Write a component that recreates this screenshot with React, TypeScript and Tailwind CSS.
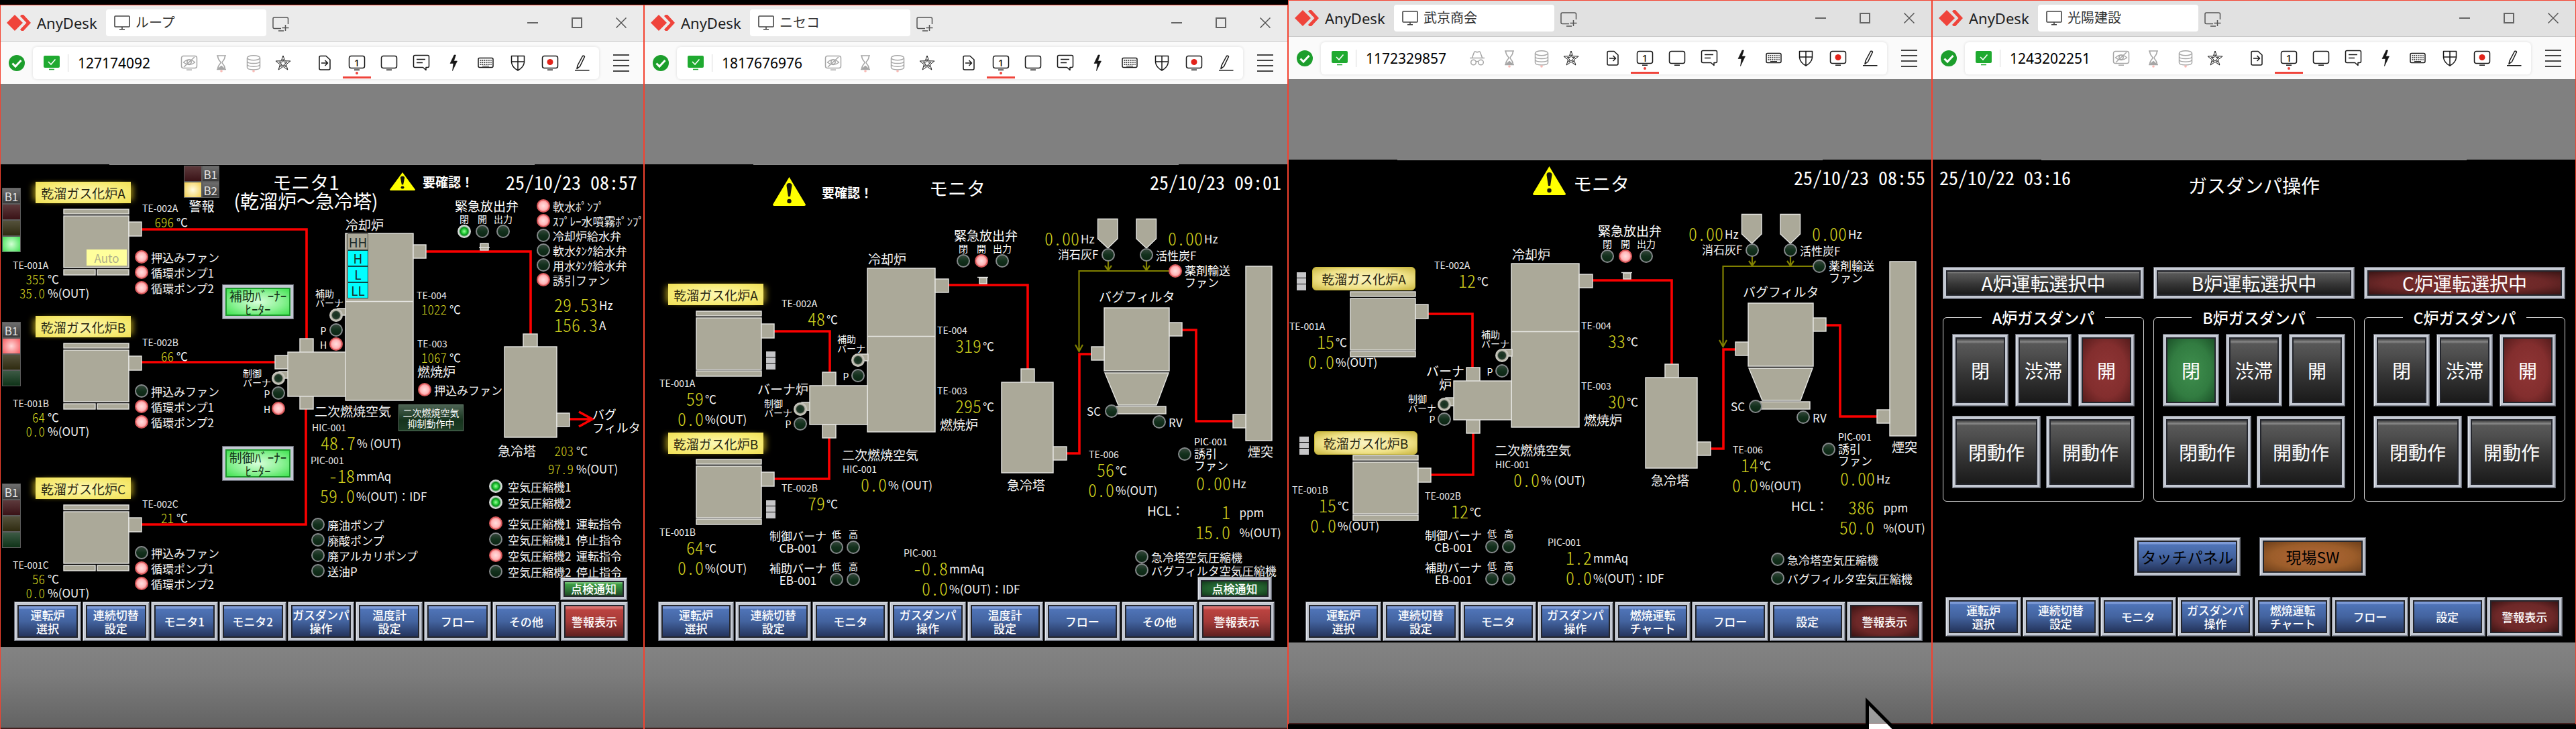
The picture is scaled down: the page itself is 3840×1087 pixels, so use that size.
import React from "react";

/* ---------- text on the process screens ---------- */

const W = 960;
const pct = (x: number) => `${(x / W) * 100}%`;

const KINDS = {
  tag: { size: 14, cls: "text-[14px] text-[#ededed]" },
  small: { size: 14, cls: "text-[14px] text-white" },
  item: { size: 17, cls: "text-[17px] text-[#f4f4f4]" },
  name: { size: 19, cls: "text-[19px] text-[#f4f4f4]" },
  alert: { size: 19, cls: "text-[19px] font-bold text-white" },
  title: { size: 28, cls: "text-[28px] text-white" },
  clock: { size: 28, cls: "text-[28px] text-white [font-feature-settings:'hwid']" },
} as const;

type Kind = keyof typeof KINDS;
type Align = "left" | "center" | "right";

function Tx({ x, y, k = "name", align = "left", children }: { x: number; y: number; k?: Kind; align?: Align; children: React.ReactNode }) {
  const kind = KINDS[k];
  const top = y - Math.round(kind.size / 2);
  const place = align === "right" ? { right: pct(W - x), top } : { left: pct(x), top };
  return (
    <span className={`absolute leading-none whitespace-nowrap ${kind.cls} ${align === "center" ? "-translate-x-1/2" : ""}`} style={place}>
      {children}
    </span>
  );
}

type Row = [value: string, unit: string];

/* An instrument: its tag above one or more values, which end `w` pixels right of the tag's start. */
function Sensor({ x, y, w, tag, rows, small = false }: { x: number; y: number; w: number; tag?: string; rows: Row[]; small?: boolean }) {
  return (
    <dl className="absolute leading-none font-normal whitespace-pre" style={{ left: pct(x), top: y }}>
      {tag && <dt className={`flex items-center text-[14px] text-[#ededed] ${small ? "h-5" : "h-4"}`}>{tag}</dt>}
      {rows.map(([v, u]) => (
        <dd key={v + u} className={`flex items-center ${small ? "h-[21px] gap-1" : "h-[30px] gap-0.5"}`}>
          <span className={`flex justify-end font-light text-[#d0d01e] [font-feature-settings:'hwid'] ${small ? "text-[19px]" : "text-[26px]"}`} style={{ width: w }}>
            {v}
          </span>
          <span className="text-[17px] text-[#f4f4f4]">{u}</span>
        </dd>
      ))}
    </dl>
  );
}

const LAMPS = {
  red: "border-[#d9595b] bg-[radial-gradient(circle,#ffdede_0%,#ffb9bb_50%,#f0585c_100%)]",
  green: "border-[#d5dad8] bg-[radial-gradient(circle,#9dff9d_0%,#1fc832_35%,#0a8a1c_50%,#c9d6cc_72%)]",
  off: "border-[#85898b] bg-[linear-gradient(#34463a_0%,#12301c_50%,#0c2413_100%)]",
  burner: "border-[#c9c8c0] bg-[radial-gradient(circle,#12301c_0%,#243a2b_48%,#b5b3a6_62%)]",
} as const;
type LampTone = keyof typeof LAMPS;

function Bulb({ tone }: { tone: LampTone }) {
  return <span className={`size-5 shrink-0 rounded-full border-2 ${LAMPS[tone]}`} />;
}

function Lamp({ x, y, tone = "off", label }: { x: number; y: number; tone?: LampTone; label?: string }) {
  return (
    <div className="absolute flex h-5 items-center gap-1" style={{ left: pct(x - 10), top: y - 10 }}>
      <Bulb tone={tone} />
      {label && <span className="text-[17px] leading-none whitespace-pre text-[#f4f4f4]">{label}</span>}
    </div>
  );
}

type LampRow = [tone: LampTone, label: string];

/* A column of labelled lamps whose first lamp is centred on x, y. */
function LampList({ x, y, gap = "gap-[3px]", wide = false, rows }: { x: number; y: number; gap?: string; wide?: boolean; rows: LampRow[] }) {
  return (
    <ul className={`absolute flex flex-col text-[17px] leading-none whitespace-pre text-[#f4f4f4] ${gap}`} style={{ left: pct(x - 10), top: y - 10 }}>
      {rows.map(([tone, label]) => (
        <li key={label} className={`flex h-5 items-center ${wide ? "gap-2" : "gap-1"}`}>
          <Bulb tone={tone} />
          {label}
        </li>
      ))}
    </ul>
  );
}

/* Emergency release valve: title and three captioned lamps. */
function ReleaseValve({ x, y, closed, open }: { x: number; y: number; closed: LampTone; open: LampTone }) {
  const columns: [string, LampTone][] = [
    ["閉", closed],
    ["開", open],
    ["出力", "off"],
  ];
  return (
    <div className="absolute text-white" style={{ left: pct(x), top: y - 10 }}>
      <p className="text-[19px] leading-5">緊急放出弁</p>
      <div className="flex gap-[7px] pl-1 text-[14px] leading-[18px]">
        {columns.map(([caption, tone]) => (
          <div key={caption} className={`flex flex-col items-center ${caption.length > 1 ? "w-7" : "w-5"}`}>
            {caption}
            <Bulb tone={tone} />
          </div>
        ))}
      </div>
    </div>
  );
}

/* ---------- drawings ---------- */

function Box({ x1, y1, x2, y2 }: { x1: number; y1: number; x2: number; y2: number }) {
  return <rect x={x1} y={y1} width={x2 - x1} height={y2 - y1} fill="#aba999" stroke="#e6e6e2" strokeWidth="1.4" />;
}
function Pipe({ d }: { d: string }) {
  return <path d={d} fill="none" stroke="#fb0000" strokeWidth="3.6" />;
}
function Furnace({ x, y, split = false }: { x: number; y: number; split?: boolean }) {
  return (
    <g>
      <Box x1={x} y1={y} x2={x + 97} y2={y + 7} />
      <Box x1={x} y1={y + 10} x2={x + 97} y2={y + 87} />
      {split ? (
        <>
          <Box x1={x} y1={y + 90} x2={x + 47} y2={y + 98} />
          <Box x1={x + 50} y1={y + 90} x2={x + 97} y2={y + 98} />
        </>
      ) : (
        <Box x1={x} y1={y + 89} x2={x + 97} y2={y + 97} />
      )}
      <Box x1={x + 97} y1={y + 19} x2={x + 116} y2={y + 40} />
    </g>
  );
}
function Indicator({ x, y }: { x: number; y: number }) {
  return (
    <g fill="#c6c6c8">
      <rect x={x} y={y} width="14" height="8" />
      <rect x={x} y={y + 9} width="14" height="8" />
      <rect x={x} y={y + 18} width="14" height="9" />
    </g>
  );
}
function Warning({ x, y, w, h }: { x: number; y: number; w: number; h: number }) {
  return (
    <svg className="absolute" style={{ left: pct(x), top: y }} width={w} height={h} viewBox="0 0 49 43" preserveAspectRatio="none" role="img" aria-label="警告">
      <path d="M24.500 0 L49 41 Q49 43 47 43 H2 Q0 43 0 41 Z" fill="#ffff00" />
      <path d="M20.500 13 Q20.500 9 24.500 9 Q28.500 9 28.500 13 L26 29 H23 Z" fill="#111" />
      <circle cx="24.500" cy="36" r="3.200" fill="#111" />
    </svg>
  );
}

/* ---------- screen furniture ---------- */

const TONES = {
  blue: "bg-[linear-gradient(#7d9ad6_0%,#7d9ad6_7%,#4f74b8_9%,#43639f_50%,#24345c_100%)] text-white",
  red: "bg-[linear-gradient(#dd7a78_0%,#d46866_7%,#bb4340_12%,#a53a38_50%,#5e2020_100%)] text-white",
  maroon: "bg-[radial-gradient(ellipse,#7b2f2f_0%,#6d2828_60%,#3a1414_100%)] text-white",
  crimson: "bg-[radial-gradient(ellipse,#8f3535_0%,#832e2e_60%,#551c1c_100%)] text-white",
  leaf: "bg-[radial-gradient(ellipse,#3f8f4e_0%,#327c41_60%,#1b5228_100%)] text-white",
  green: "bg-[linear-gradient(#73bd76_0%,#6cb86f_8%,#3f9f46_14%,#317f3a_50%,#1f4b26_100%)] text-white",
  forest: "bg-[radial-gradient(ellipse,#2e7a3c_0%,#22602e_60%,#123a1b_100%)] text-white",
  gray: "bg-[linear-gradient(#3c3c3c_0%,#858585_5%,#585858_8%,#4e4e4e_25%,#363636_55%,#1a1a1a_100%)] text-white",
  brown: "bg-[radial-gradient(ellipse,#b3683a_0%,#9c5d2a_60%,#6d3f1b_100%)] text-black",
  sky: "bg-[linear-gradient(#7d9ad6_0%,#7d9ad6_7%,#4f74b8_9%,#43639f_50%,#24345c_100%)] text-black",
} as const;
type Tone = keyof typeof TONES;

const TEXTS = {
  nav: "text-[17px] leading-5 font-medium",
  mid: "text-[23px] leading-7",
  big: "text-[28px] leading-8",
};

function PanelButton({ tone, text = "nav", className = "", children }: { tone: Tone; text?: keyof typeof TEXTS; className?: string; children: React.ReactNode }) {
  return (
    <button type="button" className={`flex border border-[#666a74] bg-[#c3c8d2] p-1 shadow-[inset_1px_1px_0_#e3e6ec,inset_-1px_-1px_0_#8b8f9a] ${className}`}>
      <span className={`flex min-w-0 flex-1 items-center justify-center self-stretch border-2 border-[#24262d] text-center whitespace-pre ${TEXTS[text]} ${TONES[tone]}`}>{children}</span>
    </button>
  );
}

function NavBar({ items, last, className }: { items: string[]; last: Tone; className: string }) {
  return (
    <nav className={`flex h-[59px] gap-0.5 ${className}`}>
      {items.map((t, i) => (
        <PanelButton key={t} tone={i === items.length - 1 ? last : "blue"} className="min-w-0 flex-1">
          {t}
        </PanelButton>
      ))}
    </nav>
  );
}

function Plate({ x, y, soft = false, children }: { x: number; y: number; soft?: boolean; children: string }) {
  return (
    <div
      className={
        soft
          ? "absolute flex h-[35px] w-[154px] items-center justify-center rounded-md border border-[#c9b93e] bg-[radial-gradient(ellipse,#fbf4c2_0%,#f0e288_60%,#c9b640_100%)] text-[19px] leading-none text-[#2a2710]"
          : "absolute flex h-8 w-[142px] items-center justify-center bg-[radial-gradient(ellipse,#fdf8b4_0%,#f7ec77_60%,#f0df55_100%)] text-[19px] leading-none text-[#2a2710] shadow-[-8px_0_8px_-4px_#8a7a14,8px_0_8px_-4px_#8a7a14]"
      }
      style={{ left: pct(x), top: y }}
    >
      {children}
    </div>
  );
}

const CELLS = {
  redOff: "bg-[linear-gradient(#5d3a3c,#3a1216)]",
  red: "bg-[radial-gradient(circle,#ffd9d9,#f5575c)]",
  yellowOff: "bg-[linear-gradient(#55523c,#2f2b10)]",
  yellow: "bg-[radial-gradient(circle,#fffbe0,#f2cd4c)]",
  greenOff: "bg-[linear-gradient(#3d5a45,#0f3318)]",
  green: "bg-[radial-gradient(circle,#d2ffd4,#3fe052)]",
} as const;
type Cell = keyof typeof CELLS;

function CellLabel({ children }: { children: string }) {
  return <span className="flex h-6 items-center justify-center border border-[#5c5c5c] bg-[linear-gradient(#6e6e6e,#3a3a3a)] text-[17px] leading-none text-[#e4e4e4]">{children}</span>;
}
function Tower({ x, y, cells }: { x: number; y: number; cells: Cell[] }) {
  return (
    <div className="absolute flex w-7 flex-col" style={{ left: pct(x), top: y }}>
      <CellLabel>B1</CellLabel>
      {cells.map((c) => (
        <span key={c} className={`h-6 border border-[#5c5c5c] ${CELLS[c]}`} />
      ))}
    </div>
  );
}

/* ---------- screen 1 ---------- */

const FURNACES: { id: string; y: number; inletY: number; cells: Cell[]; t2: string; t1: string; out: string; fan: LampTone }[] = [
  { id: "A", y: 0, inletY: 140, cells: ["redOff", "yellowOff", "green"], t2: "696", t1: "355", out: "35.0", fan: "red" },
  { id: "B", y: 200, inletY: 346, cells: ["red", "yellowOff", "greenOff"], t2: "66", t1: "64", out: "0.0", fan: "off" },
  { id: "C", y: 441, inletY: 587, cells: ["redOff", "yellowOff", "greenOff"], t2: "21", t1: "56", out: "0.0", fan: "off" },
];

const WATER: LampRow[] = [
  ["red", "軟水ﾎﾟﾝﾌﾟ"],
  ["red", "ｽﾌﾟﾚｰ水噴霧ﾎﾟﾝﾌﾟ"],
  ["off", "冷却炉給水弁"],
  ["off", "軟水ﾀﾝｸ給水弁"],
  ["off", "用水ﾀﾝｸ給水弁"],
  ["red", "誘引ファン"],
];
const PUMPS: LampRow[] = [
  ["off", "廃油ポンプ"],
  ["off", "廃酸ポンプ"],
  ["off", "廃アルカリポンプ"],
  ["off", "送油P"],
];
const COMPRESSORS: LampRow[] = [
  ["green", "空気圧縮機1"],
  ["green", "空気圧縮機2"],
];
const COMMANDS: LampRow[] = [
  ["red", "空気圧縮機1  運転指令"],
  ["off", "空気圧縮機1  停止指令"],
  ["red", "空気圧縮機2  運転指令"],
  ["off", "空気圧縮機2  停止指令"],
];

function HeaterPanel({ y, name }: { y: number; name: string }) {
  return (
    <div className="absolute flex h-[52px] w-[107px] border border-[#666a74] bg-[#c3c8d2] p-1" style={{ left: pct(331), top: y }}>
      <p className="flex-1 border-2 border-[#1c9a2c] bg-[radial-gradient(ellipse,#d8ffda_0%,#8bf294_55%,#3fe24f_100%)] text-center text-[19px] leading-5 whitespace-nowrap text-[#123016]">
        {name}
        <br />
        ﾋｰﾀｰ
      </p>
    </div>
  );
}

function Screen1() {
  return (
    <>
      <div className="relative h-[652px]">
        <svg className="absolute inset-0 size-full" viewBox="0 0 960 652" preserveAspectRatio="none" aria-hidden="true">
          <Pipe d="M211 97 H457 V262" />
          <Pipe d="M211 295 H412" />
          <Pipe d="M211 537 H456 V364" />
          <Pipe d="M634 130 H791 V254" />
          <Pipe d="M848 380 H882 M863 369 L883 380 L863 391" />
          {FURNACES.map((f) => (
            <Furnace key={f.id} x={95} y={67 + f.y} split />
          ))}
          <Box x1={447} y1={260} x2={467} y2={281} />
          <Box x1={447} y1={345} x2={467} y2={365} />
          <Box x1={410} y1={285} x2={430} y2={305} />
          <Box x1={416} y1={309} x2={430} y2={319} />
          <Box x1={429} y1={280} x2={516} y2={346} />
          <Box x1={503} y1={215} x2={516} y2={225} />
          <Box x1={515} y1={103} x2={616} y2={352} />
          <path d="M515 204.500 H616" stroke="#e6e6e2" strokeWidth="1.400" />
          <Box x1={616} y1={120} x2={635} y2={140} />
          <Box x1={716} y1={118} x2={728} y2={128} />
          <path d="M714 124 H730" stroke="#e6e6e2" strokeWidth="1.400" />
          <Box x1={780} y1={253} x2={801} y2={273} />
          <Box x1={752} y1={272} x2={830} y2={407} />
          <Box x1={830} y1={371} x2={849} y2={391} />
        </svg>

        <div className="absolute w-[53px]" style={{ left: pct(274), top: 2 }}>
          <div className="grid grid-cols-2">
            <span className={`h-6 border border-[#5c5c5c] ${CELLS.redOff}`} />
            <CellLabel>B1</CellLabel>
            <span className={`h-6 border border-[#5c5c5c] ${CELLS.yellow}`} />
            <CellLabel>B2</CellLabel>
          </div>
          <p className="text-center text-[19px] leading-6 text-white">警報</p>
        </div>
        <h2 className="absolute -translate-x-1/2 pt-3 text-center text-[28px] leading-7 whitespace-nowrap text-white" style={{ left: pct(456), top: 0 }}>
          モニタ1
          <br />
          (乾溜炉～急冷塔)
        </h2>
        <Warning x={581} y={12} w={38} h={27} />
        <Tx x={630} y={26} k="alert">要確認！</Tx>
        <Tx x={950} y={26} k="clock" align="right">25/10/23 08:57</Tx>

        {FURNACES.map((f) => (
          <React.Fragment key={f.id}>
            <Tower x={3} y={35 + f.y} cells={f.cells} />
            <Plate x={53} y={26 + f.y}>{`乾溜ガス化炉${f.id}`}</Plate>
            <Sensor small x={212} y={55 + f.y} w={47} tag={`TE-002${f.id}`} rows={[[f.t2, "℃"]]} />
            <Sensor
              small
              x={19}
              y={f.inletY}
              w={48}
              tag={`TE-001${f.id}`}
              rows={[
                [f.t1, "℃"],
                [f.out, "%(OUT)"],
              ]}
            />
            <LampList
              x={211}
              y={138 + f.y}
              rows={[
                [f.fan, "押込みファン"],
                ["red", "循環ポンプ1"],
                ["red", "循環ポンプ2"],
              ]}
            />
          </React.Fragment>
        ))}
        <span className="absolute flex h-6 w-[60px] items-center justify-center bg-[#ffff9c] text-[17px] leading-none text-[#b0b08c]" style={{ left: pct(129), top: 127 }}>
          Auto
        </span>

        <HeaterPanel y={179} name="補助ﾊﾞｰﾅｰ" />
        <HeaterPanel y={420} name="制御ﾊﾞｰﾅｰ" />

        <Tx x={362} y={311} k="small">制御</Tx>
        <Tx x={362} y={325} k="small">バーナ</Tx>
        <Lamp x={415} y={319} tone="burner" />
        <Tx x={398} y={342} k="small" align="center">P</Tx>
        <Lamp x={415} y={341} />
        <Tx x={398} y={365} k="small" align="center">H</Tx>
        <Lamp x={415} y={364} tone="red" />

        <Tx x={470} y={192} k="small">補助</Tx>
        <Tx x={470} y={206} k="small">バーナ</Tx>
        <Lamp x={501} y={225} tone="burner" />
        <Tx x={482} y={248} k="small" align="center">P</Tx>
        <Lamp x={501} y={247} />
        <Tx x={482} y={269} k="small" align="center">H</Tx>
        <Lamp x={501} y={268} tone="red" />

        <Tx x={515} y={90}>冷却炉</Tx>
        <div className="absolute flex w-[31px] flex-col text-center text-[19px] leading-[22px] text-[#1d2a2a]" style={{ left: pct(518), top: 103 }}>
          <span className="h-[25px] border border-[#4c4c46] bg-[#aba999] pt-px">HH</span>
          <span className="h-6 border border-[#0d4a4a] bg-[#00ffff]">H</span>
          <span className="h-6 border border-[#0d4a4a] bg-[#00ffff]">L</span>
          <span className="h-6 border border-[#0d4a4a] bg-[#00ffff]">LL</span>
        </div>

        <ReleaseValve x={678} y={62} closed="green" open="off" />
        <LampList x={810} y={62} gap="gap-0.5" rows={WATER} />
        <Sensor
          x={824}
          y={194}
          w={67}
          rows={[
            ["29.53", "Hz"],
            ["156.3", "A"],
          ]}
        />

        <Sensor small x={621} y={185} w={45} tag="TE-004" rows={[["1022", "℃"]]} />
        <Sensor small x={622} y={257} w={44} tag="TE-003" rows={[["1067", "℃"]]} />
        <Tx x={622} y={309}>燃焼炉</Tx>
        <Lamp x={633} y={336} tone="red" label="押込みファン" />
        <p className="absolute flex h-10 w-[97px] items-center justify-center border border-[#5f7a66] bg-[linear-gradient(#4c6353,#16341d_60%,#1f3f27)] text-center text-[14px] leading-4 text-white" style={{ left: pct(594), top: 358 }}>
          二次燃焼空気
          <br />
          抑制動作中
        </p>
        <p className="absolute text-[18px] leading-5 text-white" style={{ left: pct(883), top: 362 }}>
          バグ
          <br />
          フィルタ
        </p>

        <Tx x={469} y={368}>二次燃焼空気</Tx>
        <Sensor x={465} y={384} w={65} tag="HIC-001" rows={[["48.7", "% (OUT)"]]} />
        <Sensor
          x={463}
          y={433}
          w={66}
          tag="PIC-001"
          rows={[
            ["-18", "mmAq"],
            ["59.0", "%(OUT)：IDF"],
          ]}
        />
        <LampList x={474} y={537} rows={PUMPS} />

        <Tx x={742} y={427}>急冷塔</Tx>
        <Sensor small x={795} y={416} w={60} rows={[["203", "℃"]]} />
        <Sensor small x={795} y={443} w={60} rows={[["97.9", "%(OUT)"]]} />
        <LampList wide x={739} y={480} gap="gap-1" rows={COMPRESSORS} />
        <LampList wide x={739} y={535} gap="gap-1" rows={COMMANDS} />
        <PanelButton tone="green" className="absolute right-[25px] bottom-0.5 h-[34px] w-[100px]">点検通知</PanelButton>
      </div>
      <NavBar className="mr-6 mb-[9px] ml-[21px]" last="red" items={["運転炉\n選択", "連続切替\n設定", "モニタ1", "モニタ2", "ガスダンパ\n操作", "温度計\n設定", "フロー", "その他", "警報表示"]} />
    </>
  );
}

/* ---------- screens 2 and 3 ---------- */

type Plant = {
  clock: string;
  agentFan: LampTone;
  t4: string;
  t3: string;
  t6: string;
  hcl: string;
  hclOut: string;
  air: number;
  burner: { x: number; y: number };
  draft: { v: string; y: number };
  compressor: { x: number; y: number; gap: string };
};

function PlantDrawing({ children }: { children: React.ReactNode }) {
  return (
    <svg className="absolute inset-0 size-full" viewBox="0 0 960 652" preserveAspectRatio="none" aria-hidden="true">
      <Pipe d="M453 180 H572 V306" />
      <Pipe d="M802 247 H823 V383 H879" />
      <Pipe d="M668 283 H649 V431 H629" />
      <g fill="none" stroke="#808000" strokeWidth="2.200">
        <path d="M783 159 H648.500 V279 M643 269 L648.500 279 L654 269" />
        <path d="M692 144 V158 M687 151 L692 158 L697 151" />
        <path d="M749 144 V158 M744 151 L749 158 L754 151" />
      </g>
      {children}
      <g fill="#aba999" stroke="#e6e6e2" strokeWidth="1.400">
        <path d="M676.500 81.500 H706 V111 L691.500 125 L676.500 111 Z" />
        <path d="M734 81.500 H763.500 V111 L749 125 L734 111 Z" />
        <path d="M687 311 H782 L764 359 H707 Z" />
      </g>
      <Box x1={333} y1={155} x2={434} y2={399} />
      <path d="M333 256.500 H434" stroke="#e6e6e2" strokeWidth="1.400" />
      <Box x1={434} y1={171} x2={454} y2={191} />
      <Box x1={500} y1={169} x2={511} y2={178} />
      <path d="M497 168.500 H513" stroke="#e6e6e2" strokeWidth="1.400" />
      <Box x1={266} y1={310} x2={286} y2={331} />
      <Box x1={266} y1={388} x2={286} y2={408} />
      <Box x1={235} y1={355} x2={248} y2={367} />
      <Box x1={321} y1={283} x2={334} y2={293} />
      <Box x1={247} y1={330} x2={333} y2={388} />
      <Box x1={562} y1={305} x2={582} y2={326} />
      <Box x1={533} y1={325} x2={610} y2={460} />
      <Box x1={610} y1={421} x2={630} y2={441} />
      <Box x1={686} y1={214} x2={783} y2={308} />
      <Box x1={783} y1={236} x2={802} y2={256} />
      <Box x1={667} y1={272} x2={686} y2={292} />
      <Box x1={704} y1={361} x2={778} y2={372} />
      <Box x1={897} y1={152} x2={936} y2={412} />
      <Box x1={878} y1={373} x2={897} y2={393} />
    </svg>
  );
}

/* The low and high fire lamps of both burners. */
function FireLevels({ x, y }: { x: number; y: number }) {
  const burners = [
    ["制御バーナ", "CB-001"],
    ["補助バーナ", "EB-001"],
  ];
  return (
    <div className="absolute flex flex-col gap-2 text-white" style={{ left: pct(x), top: y - 13 }}>
      {burners.map(([name, code]) => (
        <div key={code} className="flex h-10 gap-[5px]">
          <p className="pt-1 text-center text-[17px] leading-[18px]">
            {name}
            <br />
            {code}
          </p>
          {["低", "高"].map((level) => (
            <div key={level} className="flex w-5 flex-col items-center text-[14px] leading-5">
              {level}
              <Bulb tone="off" />
            </div>
          ))}
        </div>
      ))}
    </div>
  );
}

function PlantLabels({ p }: { p: Plant }) {
  return (
    <>
      <Tx x={467} y={35} k="title" align="center">モニタ</Tx>
      <Tx x={950} y={26} k="clock" align="right">{p.clock}</Tx>

      <ReleaseValve x={462} y={106} closed="off" open="red" />

      <Sensor x={597} y={95} w={52} rows={[["0.00", "Hz"]]} />
      <Sensor x={781} y={95} w={52} rows={[["0.00", "Hz"]]} />
      <Tx x={617} y={134} k="item">消石灰F</Tx>
      <Lamp x={692} y={135} />
      <Lamp x={749} y={135} label="活性炭F" />
      <Lamp x={792} y={159} tone={p.agentFan} />
      <p className="absolute text-[17px] leading-[18px] text-white" style={{ left: pct(806), top: 149 }}>
        薬剤輸送
        <br />
        ファン
      </p>
      <Tx x={678} y={197}>バグフィルタ</Tx>
      <Tx x={660} y={368} k="item">SC</Tx>
      <Lamp x={697} y={368} />
      <Lamp x={768} y={384} label="RV" />

      <Tx x={334} y={141}>冷却炉</Tx>
      <Tx x={288} y={260} k="small">補助</Tx>
      <Tx x={288} y={274} k="small">バーナ</Tx>
      <Lamp x={319} y={292} tone="burner" />
      <Tx x={301} y={316} k="small" align="center">P</Tx>
      <Lamp x={319} y={315} />
      <Tx x={179} y={356} k="small">制御</Tx>
      <Tx x={179} y={370} k="small">バーナ</Tx>
      <Lamp x={233} y={365} tone="burner" />
      <Tx x={215} y={387} k="small" align="center">P</Tx>
      <Lamp x={233} y={387} />

      <Sensor x={437} y={239} w={66} tag="TE-004" rows={[[p.t4, "℃"]]} />
      <Sensor x={437} y={329} w={66} tag="TE-003" rows={[[p.t3, "℃"]]} />
      <Tx x={441} y={388}>燃焼炉</Tx>
      <Tx x={541} y={478}>急冷塔</Tx>

      <Tx x={p.air} y={433}>二次燃焼空気</Tx>
      <Sensor x={p.air + 1} y={446} w={66} tag="HIC-001" rows={[["0.0", "% (OUT)"]]} />
      <Sensor
        x={663}
        y={424}
        w={38}
        tag="TE-006"
        rows={[
          [p.t6, "℃"],
          ["0.0", "%(OUT)"],
        ]}
      />

      <Lamp x={806} y={432} />
      <div className="absolute text-[17px] leading-[18px] text-white" style={{ left: pct(820), top: 404 }}>
        <p className="text-[14px]">PIC-001</p>
        <p>誘引</p>
        <p>ファン</p>
      </div>
      <Tx x={900} y={428}>煙突</Tx>
      <Sensor x={822} y={460} w={53} rows={[["0.00", "Hz"]]} />
      <Tx x={750} y={516}>HCL：</Tx>
      <Sensor
        x={810}
        y={503}
        w={64}
        rows={[
          [p.hcl, "   ppm"],
          [p.hclOut, "   %(OUT)"],
        ]}
      />

      <FireLevels x={p.burner.x} y={p.burner.y} />
      <Sensor
        x={387}
        y={p.draft.y}
        w={66}
        tag="PIC-001"
        rows={[
          [p.draft.v, "mmAq"],
          ["0.0", "%(OUT)：IDF"],
        ]}
      />
      <LampList
        x={p.compressor.x}
        y={p.compressor.y}
        gap={p.compressor.gap}
        rows={[
          ["off", "急冷塔空気圧縮機"],
          ["off", "バグフィルタ空気圧縮機"],
        ]}
      />
    </>
  );
}

const NISEKO: Plant = {
  clock: "25/10/23 09:01",
  agentFan: "red",
  t4: "319",
  t3: "295",
  t6: "56",
  hcl: "1",
  hclOut: "15.0",
  air: 295,
  burner: { x: 187, y: 554 },
  draft: { v: "-0.8", y: 571 },
  compressor: { x: 742, y: 585, gap: "gap-0" },
};
const TAKEKYO: Plant = {
  clock: "25/10/23 08:55",
  agentFan: "off",
  t4: "33",
  t3: "30",
  t6: "14",
  hcl: "386",
  hclOut: "50.0",
  air: 308,
  burner: { x: 204, y: 560 },
  draft: { v: "1.2", y: 562 },
  compressor: { x: 730, y: 596, gap: "gap-2" },
};

function Screen2() {
  return (
    <>
      <div className="relative h-[652px]">
        <PlantDrawing>
          <Pipe d="M194 249 H277 V312" />
          <Pipe d="M194 469 H276 V407" />
          <Furnace x={78} y={219} />
          <Furnace x={78} y={440} />
          <Indicator x={182} y={279} />
          <Indicator x={182} y={501} />
        </PlantDrawing>
        <Warning x={192} y={19} w={49} h={43} />
        <Tx x={265} y={42} k="alert">要確認！</Tx>
        <PlantLabels p={NISEKO} />
        <Plate x={36} y={178}>乾溜ガス化炉A</Plate>
        <Plate x={36} y={400}>乾溜ガス化炉B</Plate>
        <Sensor x={205} y={199} w={65} tag="TE-002A" rows={[["48", "℃"]]} />
        <Sensor x={205} y={474} w={65} tag="TE-002B" rows={[["79", "℃"]]} />
        <Sensor
          x={23}
          y={318}
          w={66}
          tag="TE-001A"
          rows={[
            ["59", "℃"],
            ["0.0", "%(OUT)"],
          ]}
        />
        <Sensor
          x={23}
          y={540}
          w={66}
          tag="TE-001B"
          rows={[
            ["64", "℃"],
            ["0.0", "%(OUT)"],
          ]}
        />
        <Tx x={169} y={335}>バーナ炉</Tx>
        <PanelButton tone="forest" className="absolute right-6 bottom-0.5 h-[35px] w-[111px]">点検通知</PanelButton>
      </div>
      <NavBar className="mr-5 mb-[9px] ml-[21px]" last="red" items={["運転炉\n選択", "連続切替\n設定", "モニタ", "ガスダンパ\n操作", "温度計\n設定", "フロー", "その他", "警報表示"]} />
    </>
  );
}

function Screen3() {
  return (
    <>
      <div className="relative mb-[7px] h-[652px]">
        <PlantDrawing>
          <Pipe d="M209 230 H275 V312" />
          <Pipe d="M212 470 H276 V407" />
          <Furnace x={93} y={197} />
          <Furnace x={97} y={441} />
          <Indicator x={13} y={168} />
          <Indicator x={17} y={413} />
        </PlantDrawing>
        <Warning x={365} y={10} w={49} h={43} />
        <PlantLabels p={TAKEKYO} />
        <Plate soft x={36} y={160}>乾溜ガス化炉A</Plate>
        <Plate soft x={39} y={405}>乾溜ガス化炉B</Plate>
        <Sensor x={218} y={149} w={62} tag="TE-002A" rows={[["12", "℃"]]} />
        <Sensor x={204} y={493} w={65} tag="TE-002B" rows={[["12", "℃"]]} />
        <Sensor
          x={2}
          y={240}
          w={67}
          tag="TE-001A"
          rows={[
            ["15", "℃"],
            ["0.0", "%(OUT)"],
          ]}
        />
        <Sensor
          x={6}
          y={484}
          w={66}
          tag="TE-001B"
          rows={[
            ["15", "℃"],
            ["0.0", "%(OUT)"],
          ]}
        />
        <p className="absolute w-[57px] text-center text-[19px] leading-5 text-white" style={{ left: pct(206), top: 305 }}>
          バーナ
          <br />
          炉
        </p>
      </div>
      <NavBar className="mr-[14px] mb-0.5 ml-[26px]" last="maroon" items={["運転炉\n選択", "連続切替\n設定", "モニタ", "ガスダンパ\n操作", "燃焼運転\nチャート", "フロー", "設定", "警報表示"]} />
    </>
  );
}

/* ---------- screen 4 ---------- */

const DAMPERS: { id: string; select: Tone; close: Tone; open: Tone }[] = [
  { id: "A", select: "gray", close: "gray", open: "crimson" },
  { id: "B", select: "gray", close: "leaf", open: "gray" },
  { id: "C", select: "maroon", close: "gray", open: "crimson" },
];

function Screen4() {
  return (
    <div className="flex h-full flex-col">
      <header className="grid h-[160px] grid-cols-3 px-[11px] pt-3 text-white">
        <time className="text-[28px] leading-7 [font-feature-settings:'hwid']">25/10/22 03:16</time>
        <h2 className="pt-3 text-center text-[28px] leading-7">ガスダンパ操作</h2>
      </header>
      <div className="grid grid-cols-3 gap-[14px] px-4">
        {DAMPERS.map((d) => (
          <section key={d.id} className="flex flex-col">
            <PanelButton tone={d.select} text="big" className="h-12">{`${d.id}炉運転選択中`}</PanelButton>
            <fieldset className="mt-[11px] h-[291px] rounded-md border border-[#d8d8d8] px-[13px] pt-[9px]">
              <legend className="mx-auto px-4 text-[23px] leading-8 font-medium text-white">{`${d.id}炉ガスダンパ`}</legend>
              <div className="grid grid-cols-3 gap-[10px]">
                <PanelButton tone={d.close} text="big" className="h-[108px]">閉</PanelButton>
                <PanelButton tone="gray" text="big" className="h-[108px]">渋滞</PanelButton>
                <PanelButton tone={d.open} text="big" className="h-[108px]">開</PanelButton>
              </div>
              <div className="mt-[14px] grid grid-cols-2 gap-2">
                <PanelButton tone="gray" text="big" className="h-[108px]">閉動作</PanelButton>
                <PanelButton tone="gray" text="big" className="h-[108px]">開動作</PanelButton>
              </div>
            </fieldset>
          </section>
        ))}
      </div>
      <div className="mt-[53px] flex justify-center gap-7 pr-3">
        <PanelButton tone="sky" text="mid" className="h-[58px] w-[159px]">タッチパネル</PanelButton>
        <PanelButton tone="brown" text="mid" className="h-[58px] w-[159px]">現場SW</PanelButton>
      </div>
      <NavBar className="mx-5 mt-auto mb-[9px]" last="maroon" items={["運転炉\n選択", "連続切替\n設定", "モニタ", "ガスダンパ\n操作", "燃焼運転\nチャート", "フロー", "設定", "警報表示"]} />
    </div>
  );
}

/* ---------- remote desktop window ---------- */

function Icon({ children, faint = false }: { children: React.ReactNode; faint?: boolean }) {
  return (
    <svg viewBox="0 0 28 28" className={`size-7 ${faint ? "text-[#a6a6a6]" : "text-[#161616]"}`} fill="none" stroke="currentColor" strokeWidth="1.500" strokeLinejoin="round" aria-hidden="true">
      {children}
    </svg>
  );
}

const monitor = (
  <>
    <rect x="2.500" y="3.500" width="23" height="18" rx="3" />
    <path d="M10 24.200 H18" />
  </>
);

const privacyIcon = (
  <Icon faint>
    {monitor}
    <path d="M5.500 13 Q14 5 22.500 13 Q14 20 5.500 13 Z M6 20 L22 5" />
    <circle cx="14" cy="12.500" r="3.200" />
  </Icon>
);
const incognitoIcon = (
  <Icon faint>
    <path d="M3 13.500 H25 M6.500 13 L9.500 5 Q10 3.500 12 4.300 Q14 5.200 16 4.300 Q18 3.500 18.500 5 L21.500 13" />
    <circle cx="8.500" cy="20" r="3.800" />
    <circle cx="19.500" cy="20" r="3.800" />
    <path d="M12.300 19 Q14 18 15.700 19" />
  </Icon>
);
const hourglassIcon = (
  <Icon faint>
    <path d="M7 3 H21 M7 23.500 H21 M8.500 3 C8.500 10 13 11 13 13.300 C13 15.500 8.500 16.500 8.500 23.500 M19.500 3 C19.500 10 15 11 15 13.300 C15 15.500 19.500 16.500 19.500 23.500" />
    <path d="M9.500 22.500 L14 18.500 L18.500 22.500 Z" fill="currentColor" />
    <circle cx="14" cy="26" r="1.800" fill="#f9b9b4" stroke="none" />
  </Icon>
);
const discsIcon = (
  <Icon faint>
    <ellipse cx="14" cy="6.200" rx="9.500" ry="3.500" />
    <path d="M4.500 6.500 V20.500 C4.500 25 23.500 25 23.500 20.500 V6.500 M4.500 11.200 C4.500 15.700 23.500 15.700 23.500 11.200 M4.500 15.800 C4.500 20.300 23.500 20.300 23.500 15.800" />
    <circle cx="14" cy="26" r="1.800" fill="#f9b9b4" stroke="none" />
  </Icon>
);
const starIcon = (
  <Icon>
    <path strokeWidth="1" d="M14 3 L16.800 10.800 L25 11 L18.500 16 L20.800 24 L14 19.300 L7.200 24 L9.500 16 L3 11 L11.200 10.800 Z M14 8.500 L15.500 12.600 L19.600 12.700 L16.400 15.300 L17.500 19.300 L14 16.900 L10.500 19.300 L11.600 15.300 L8.400 12.700 L12.500 12.600 Z" />
  </Icon>
);
const fileIcon = (
  <Icon>
    <path d="M8 3.500 H16 L22 9 V22 Q22 24 20 24 H8 Q6 24 6 22 V5.500 Q6 3.500 8 3.500 Z" />
    <path d="M9 14 H18.500 M14.500 10 L18.500 14 L14.500 18" />
  </Icon>
);
const screenIcon = <Icon>{monitor}</Icon>;
const chatIcon = (
  <Icon>
    <path d="M4.500 2.500 H23.500 Q25.500 2.500 25.500 4.500 V18.500 Q25.500 20.500 23.500 20.500 H21 V24.500 L16.500 20.500 H4.500 Q2.500 20.500 2.500 18.500 V4.500 Q2.500 2.500 4.500 2.500 Z M7 8.500 H20 M7 13.500 H16" />
  </Icon>
);
const boltIcon = (
  <Icon>
    <path d="M15 2 L9 14.500 H14 L12.500 25.500 L19.500 11 H14.500 L17.500 2 Z" fill="currentColor" strokeWidth="0.600" />
  </Icon>
);
const keyboardIcon = (
  <Icon>
    <rect x="3" y="6.500" width="22" height="14" rx="2" />
    <path strokeWidth="1.600" strokeDasharray="1.800 1" d="M5.500 10 H23 M5.500 13 H23 M5.500 16 H23" />
    <path d="M9 18.500 H19" strokeWidth="1" />
  </Icon>
);
const shieldIcon = (
  <Icon>
    <path d="M4.500 3.500 H23.500 V13 Q22.500 20.500 14 25 Q5.500 20.500 4.500 13 Z M14 3.500 V25 M4.500 12 H23.500" />
  </Icon>
);
const recordIcon = (
  <Icon>
    {monitor}
    <circle cx="14" cy="12.500" r="4.500" fill="#e2231a" stroke="none" />
  </Icon>
);
const penIcon = (
  <Icon>
    <path d="M6 22.500 L7 17.500 L14.500 3.500 Q16.500 2.500 17.500 4.500 L10.500 19 Z M3 24.800 H24.500" />
  </Icon>
);

function ToolButton({ label, children }: { label: string; children: React.ReactNode }) {
  return (
    <button type="button" aria-label={label} className="flex w-12 items-center justify-center">
      {children}
    </button>
  );
}

function RemoteWindow({ name, id, incognito = false, offset = false, children }: { name: string; id: string; incognito?: boolean; offset?: boolean; children: React.ReactNode }) {
  return (
    <section
      className={`relative flex min-w-0 flex-col bg-black after:pointer-events-none after:absolute after:inset-0 after:border after:border-b-0 after:border-[#f4422f] ${offset ? "mt-[7px]" : "mb-[7px]"}`}
      aria-label={name}
    >
      <header className={`flex h-[55px] items-center border-b border-[#c9c9c9] pr-[26px] pl-[10px] ${offset ? "bg-[#ebebeb]" : "bg-[#e1e1e1]"}`}>
        <svg viewBox="0 0 36 24" className="h-6 w-9" fill="#ef443b" aria-hidden="true">
          <path d="M12 0 L24 12 L12 24 L0 12 Z" />
          <path d="M20 2 L22 0 H25 L36 12 L25 24 H22 L20 22 L29.500 12 Z" />
        </svg>
        <h1 className="w-[112px] shrink-0 pl-[9px] text-[22px] leading-8 text-[#222]">AnyDesk</h1>
        <div className="flex h-10 w-[239px] items-center gap-2 rounded-sm bg-white pl-3 text-[20px] leading-8 text-[#333]">
          <svg viewBox="0 0 24 22" className="h-[22px] w-6" fill="none" stroke="#444" strokeWidth="1.600" aria-hidden="true">
            <rect x="1" y="1" width="22" height="16" rx="1" />
            <path d="M12 17 V20.500 M8 20.700 H16" />
          </svg>
          {name}
        </div>
        <button type="button" aria-label="新しいタブ" className="ml-[9px] pt-1">
          <svg viewBox="0 0 25 22" className="h-[22px] w-[25px]" fill="none" stroke="#555" strokeWidth="1.500" aria-hidden="true">
            <path d="M13 17.500 H3 Q1 17.500 1 15.500 V3 Q1 1 3 1 H21 Q23.500 1 23.500 3 V11 M9 21 H17 M19.500 12 V21 M14.500 16.500 H24.500" />
          </svg>
        </button>
        <div className="ml-auto flex items-center gap-[50px]">
          <button type="button" aria-label="最小化" className="flex h-4 w-4 items-center">
            <span className="h-0.5 w-full bg-[#666]" />
          </button>
          <button type="button" aria-label="最大化" className="h-4 w-4 border-2 border-[#666]" />
          <button type="button" aria-label="閉じる">
            <svg viewBox="0 0 16 16" className="size-4" stroke="#555" strokeWidth="1.500" aria-hidden="true">
              <path d="M0.500 0.500 L15.500 15.500 M15.500 0.500 L0.500 15.500" />
            </svg>
          </button>
        </div>
      </header>

      <div className="flex h-[63px] items-center bg-[#fafafa] pl-[13px]">
        <svg viewBox="0 0 24 24" className="size-6" aria-hidden="true">
          <circle cx="12" cy="12" r="12" fill="#1c9e2c" />
          <path d="M5.500 12.500 L10 17 L18.500 8" fill="none" stroke="#fff" strokeWidth="3" />
        </svg>
        <div className="ml-3 flex h-12 flex-1 items-stretch rounded-md bg-white pr-px pl-4 shadow-[0_0_4px_#ddd]">
          <svg viewBox="0 0 24 22" className="h-[22px] w-6 self-center" aria-hidden="true">
            <rect width="24" height="18" rx="2" fill="#1faa30" />
            <path d="M7 9 L11 13 L17.500 5.500" fill="none" stroke="#fff" strokeWidth="1.600" />
            <path d="M8 20.500 H16" stroke="#1faa30" strokeWidth="1.600" />
          </svg>
          <span className="ml-3 h-[26px] w-px self-center bg-[#d8d8d8]" />
          <input readOnly aria-label="リモートアドレス" value={id} className="h-full w-0 min-w-0 flex-1 bg-transparent pl-[14px] text-[21px] leading-8 text-black outline-none" />
          <ToolButton label="プライバシー">{incognito ? incognitoIcon : privacyIcon}</ToolButton>
          <ToolButton label="待機">{hourglassIcon}</ToolButton>
          <ToolButton label="ストレージ">{discsIcon}</ToolButton>
          <button type="button" aria-label="お気に入り" className="mr-[18px] flex w-10 items-center justify-center">
            {starIcon}
          </button>
          <ToolButton label="ファイル転送">{fileIcon}</ToolButton>
          <button type="button" aria-label="モニター1" className="relative flex w-12 items-center justify-center">
            <Icon>{monitor}</Icon>
            <span className="absolute inset-x-0 top-[13px] text-center text-[15px] leading-5 font-medium text-[#161616]">1</span>
            <span className="absolute bottom-[7px] left-[22px] size-1 rounded-full bg-[#ef443b]" />
            <span className="absolute inset-x-[3px] bottom-px h-[3px] bg-[#ef443b]" />
          </button>
          <ToolButton label="表示">{screenIcon}</ToolButton>
          <ToolButton label="チャット">{chatIcon}</ToolButton>
          <ToolButton label="アクション">{boltIcon}</ToolButton>
          <ToolButton label="キーボード">{keyboardIcon}</ToolButton>
          <ToolButton label="権限">{shieldIcon}</ToolButton>
          <ToolButton label="録画">{recordIcon}</ToolButton>
          <ToolButton label="ホワイトボード">{penIcon}</ToolButton>
        </div>
        <button type="button" aria-label="メニュー" className="mr-[22px] ml-[21px] flex w-6 flex-col gap-[6px]">
          <span className="h-0.5 bg-[#444]" />
          <span className="h-0.5 bg-[#444]" />
          <span className="h-0.5 bg-[#444]" />
          <span className="h-0.5 bg-[#444]" />
        </button>
      </div>

      <div className="h-[120px] bg-[#808080]" />
      <main className="h-[720px] overflow-hidden bg-black font-['Noto_Sans_CJK_JP',sans-serif]">
        <div className="relative h-full before:absolute before:top-0 before:left-[17%] before:h-px before:w-[66%] before:bg-[#8a8a8a]">{children}</div>
      </main>
      <div className="min-h-[120px] flex-1 border-b-2 border-[#42201f] bg-[linear-gradient(#838383,#7c7c7c_35%,#636363)]" />
    </section>
  );
}

export default function App() {
  return (
    <div className="relative grid min-h-screen grid-cols-4 overflow-hidden bg-black font-['Noto_Sans','Noto_Sans_CJK_JP',sans-serif]">
      <RemoteWindow name="ループ" id="127174092" offset>
        <Screen1 />
      </RemoteWindow>
      <RemoteWindow name="ニセコ" id="1817676976" offset>
        <Screen2 />
      </RemoteWindow>
      <RemoteWindow name="武京商会" id="1172329857" incognito>
        <Screen3 />
      </RemoteWindow>
      <RemoteWindow name="光陽建設" id="1243202251">
        <Screen4 />
      </RemoteWindow>
      <svg className="absolute bottom-0 left-[72.400%] h-12 w-12" viewBox="0 0 48 48" aria-hidden="true">
        <path d="M3.500 7 V60 H56 Z" fill="#fff" fillOpacity="0.350" />
        <path d="M3.500 40 H37 L48 52 H3.500 Z" fill="#fff" />
        <path d="M3.500 7 V60 H56 Z" fill="none" stroke="#000" strokeWidth="5" />
      </svg>
    </div>
  );
}
